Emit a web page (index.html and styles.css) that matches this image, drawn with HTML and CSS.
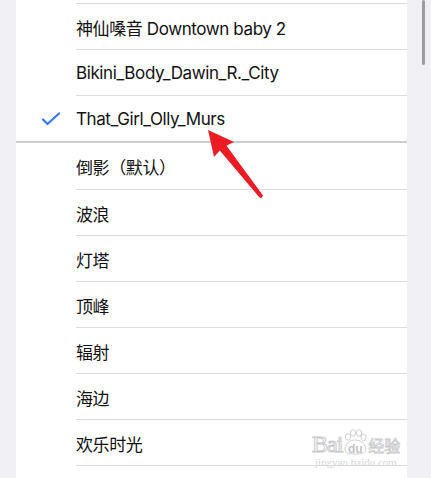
FILE: index.html
```html
<!DOCTYPE html>
<html lang="zh">
<head>
    <meta charset="UTF-8">
    <meta name="viewport" content="width=device-width, initial-scale=1.0">
    <title>铃声</title>
    <link rel="stylesheet" href="styles.css">
</head>
<body>

    <div class="page">
        <!-- 已添加的铃声 -->
        <ul class="group group-top">
            <li class="row"><span class="mark"></span><span class="cell">神仙嗓音 Downtown baby 2</span></li>
            <li class="row"><span class="mark"></span><span class="cell">Bikini_Body_Dawin_R._City</span></li>
            <li class="row selected">
                <span class="mark">
                    <svg class="check" viewBox="0 0 20 14" width="20" height="14">
                        <path d="M2 7.5 L6.5 12 L18 1.5" fill="none" stroke="#3478f6" stroke-width="2.2" stroke-linecap="round" stroke-linejoin="round"/>
                    </svg>
                </span>
                <span class="cell">That_Girl_Olly_Murs</span>
            </li>
        </ul>

        <div class="divider"></div>

        <!-- 系统铃声 -->
        <ul class="group group-rest">
            <li class="row"><span class="mark"></span><span class="cell">倒影（默认）</span></li>
            <li class="row"><span class="mark"></span><span class="cell">波浪</span></li>
            <li class="row"><span class="mark"></span><span class="cell">灯塔</span></li>
            <li class="row"><span class="mark"></span><span class="cell">顶峰</span></li>
            <li class="row"><span class="mark"></span><span class="cell">辐射</span></li>
            <li class="row"><span class="mark"></span><span class="cell">海边</span></li>
            <li class="row"><span class="mark"></span><span class="cell">欢乐时光</span></li>
            <li class="row"><span class="mark"></span><span class="cell"></span></li>
        </ul>

        <div class="scrollbar"></div>

        <!-- 标注箭头 -->
        <svg class="arrow" viewBox="0 0 431 478" width="431" height="478">
            <polygon points="208,130 234,142 226.5,145.8 263,195.5 261.5,198 259.5,197.5 219.8,150.5 214,157" fill="#ec1c24"/>
        </svg>

        <div class="watermark">
            <div class="wm-logo">
                <span class="wm-bai">Bai</span>
                <span class="wm-paw">
                    <svg viewBox="0 0 26 26" width="26" height="26">
                        <g fill="#fff" stroke="#cfcfd2" stroke-width="1">
                            <ellipse cx="6" cy="8" rx="2.6" ry="3.2"/>
                            <ellipse cx="11" cy="4" rx="2.6" ry="3.2"/>
                            <ellipse cx="17" cy="4" rx="2.6" ry="3.2"/>
                            <ellipse cx="21.5" cy="8.5" rx="2.6" ry="3.2"/>
                            <path d="M3 20 C4 13 9 11 13 11 C18 11 23 14 24 20 C24 24 20 25 13 25 C6 25 3 24 3 20 Z"/>
                        </g>
                    </svg>
                    <span class="wm-du">du</span>
                </span>
                <span class="wm-jy">经验</span>
            </div>
            <div class="wm-url">jingyan.baidu.com</div>
        </div>
    </div>

</body>
</html>
```

FILE: styles.css
```css
body {
    margin: 0;
    background-color: #efeff4;
    font-family: "Inter", "Noto Sans CJK SC", sans-serif;
    overflow: hidden;
}
.page {
    position: relative;
    width: 431px;
    height: 478px;
    overflow: hidden;
    display: flex;
    flex-direction: column;
}
.group {
    list-style: none;
    margin: 0 0 0 16px;
    padding: 0;
    width: 391px;
    background-color: #fff;
    flex-shrink: 0;
}
.group-top {
    padding-top: 3px;
}
.group-rest {
    flex: 1;
}
.row {
    display: flex;
    height: 46px;
}
.mark {
    width: 60px;
    display: flex;
    align-items: center;
    justify-content: flex-end;
    padding-right: 15px;
    box-sizing: border-box;
}
.check {
    margin-top: 2px;
}
.cell {
    flex: 1;
    display: flex;
    align-items: center;
    border-top: 1px solid #dcdce0;
    font-size: 17px;
    letter-spacing: -0.4px;
    color: #111;
    padding-top: 1px;
}
.group-rest .row:first-child .cell {
    border-top: none;
}
.divider {
    margin-left: 16px;
    width: 391px;
    height: 2px;
    flex-shrink: 0;
    background-color: #cdcdd1;
}
.scrollbar {
    position: absolute;
    left: 422px;
    top: 0;
    width: 3px;
    height: 65px;
    border-radius: 2px;
    background-color: #9c9ca0;
}
.arrow {
    position: absolute;
    left: 0;
    top: 0;
    pointer-events: none;
}
.watermark {
    position: absolute;
    left: 312px;
    top: 423px;
    width: 92px;
    color: #fff;
    font-family: "Liberation Serif", serif;
}
.wm-logo {
    display: flex;
    align-items: flex-end;
    height: 33px;
}
.wm-bai {
    font-size: 24px;
    line-height: 24px;
    -webkit-text-stroke: 1px #c9c9cc;
    letter-spacing: -1px;
}
.wm-paw {
    position: relative;
    width: 26px;
    height: 30px;
    display: flex;
    align-items: flex-end;
}
.wm-paw svg {
    position: absolute;
    left: 0;
    bottom: 1px;
}
.wm-du {
    position: relative;
    width: 26px;
    text-align: center;
    font-size: 12px;
    line-height: 14px;
    color: #c4c4c7;
    font-family: "Liberation Sans", sans-serif;
    font-weight: bold;
}
.wm-jy {
    font-size: 16px;
    line-height: 22px;
    color: #fff;
    -webkit-text-stroke: 0.8px #c9c9cc;
    font-family: "Noto Sans CJK SC", sans-serif;
}
.wm-url {
    font-size: 11px;
    line-height: 12px;
    color: #d6d6d9;
    padding-left: 3px;
}
```
